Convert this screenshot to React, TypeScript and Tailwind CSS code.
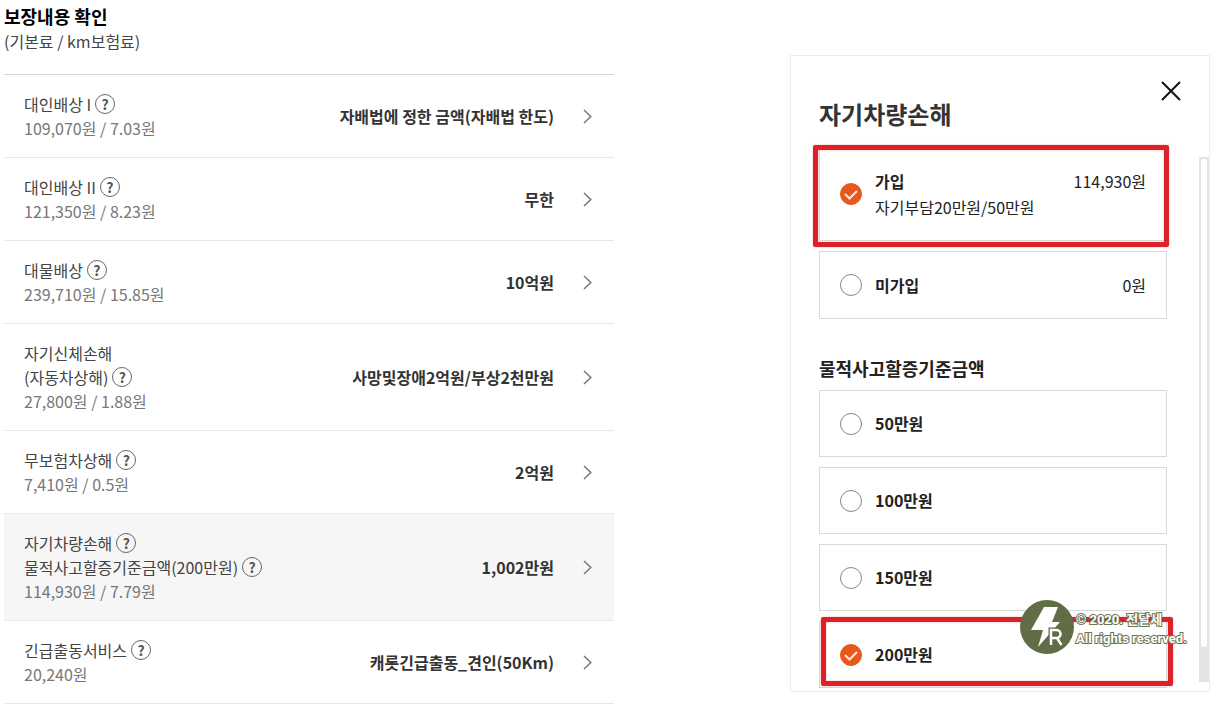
import React from "react";

const coverages = [
  {
    lines: [{ text: "대인배상 I", help: true }],
    price: "109,070원 / 7.03원",
    value: "자배법에 정한 금액(자배법 한도)",
  },
  {
    lines: [{ text: "대인배상 II", help: true }],
    price: "121,350원 / 8.23원",
    value: "무한",
  },
  {
    lines: [{ text: "대물배상", help: true }],
    price: "239,710원 / 15.85원",
    value: "10억원",
  },
  {
    lines: [
      { text: "자기신체손해", help: false },
      { text: "(자동차상해)", help: true },
    ],
    price: "27,800원 / 1.88원",
    value: "사망및장애2억원/부상2천만원",
  },
  {
    lines: [{ text: "무보험차상해", help: true }],
    price: "7,410원 / 0.5원",
    value: "2억원",
  },
  {
    lines: [
      { text: "자기차량손해", help: true },
      { text: "물적사고할증기준금액(200만원)", help: true },
    ],
    price: "114,930원 / 7.79원",
    value: "1,002만원",
    active: true,
  },
  {
    lines: [{ text: "긴급출동서비스", help: true }],
    price: "20,240원",
    value: "캐롯긴급출동_견인(50Km)",
  },
];

const HelpButton = ({ label }: { label: string }) => (
  <button
    type="button"
    aria-label={`${label} 도움말`}
    className="flex size-5 items-center justify-center rounded-full border border-[#666] text-sm font-bold leading-none text-[#555]"
  >
    ?
  </button>
);

const CoverageRow = ({ lines, price, value, active }: any) => (
  <li
    className={`flex items-center justify-between border-b border-[#e8e8e8] py-[17px] pl-5 pr-[21px] ${
      active ? "bg-[#f6f6f6]" : ""
    }`}
  >
    <div className="leading-6">
      {lines.map((line: any) => (
        <div key={line.text} className="flex items-center gap-1 text-[#444]">
          <span>{line.text}</span>
          {line.help && <HelpButton label={line.text} />}
        </div>
      ))}
      <div className="text-[#777]">{price}</div>
    </div>
    <div className="flex items-center gap-7">
      <span className="font-bold text-[#333]">{value}</span>
      <button type="button" aria-label={`${lines[0].text} 변경`}>
        <svg width="11" height="16" viewBox="0 0 11 16" fill="none">
          <path d="M2 2 8.800 8.500 2 15" stroke="#777" strokeWidth="1.500" />
        </svg>
      </button>
    </div>
  </li>
);

const Option = ({ name, title, detail, amount, checked, compact }: any) => (
  <label
    className={`flex items-center gap-[13px] border border-[#d9d9d9] px-5 py-5 text-[#222] ${
      compact ? "leading-[25px]" : "leading-[26px]"
    }`}
  >
    <span className="grid shrink-0 place-items-center">
      <input
        type="radio"
        name={name}
        defaultChecked={checked}
        className="peer col-start-1 row-start-1 size-[22px] appearance-none rounded-full border border-[#888] bg-white checked:border-[#e8571e] checked:bg-[#e8571e]"
      />
      <svg
        className="pointer-events-none invisible col-start-1 row-start-1 peer-checked:visible"
        width="22"
        height="22"
        viewBox="0 0 22 22"
        fill="none"
      >
        <path d="M5 11 9.500 15.500 17 8" stroke="#ffe9dc" strokeWidth="2" />
      </svg>
    </span>
    <span className="flex-1">
      <span className="flex justify-between">
        <span className="font-bold">{title}</span>
        {amount && <span>{amount}</span>}
      </span>
      {detail && <span className="block">{detail}</span>}
    </span>
  </label>
);

// red marker frame drawn over an option
const Marker = ({ className }: { className: string }) => (
  <div
    className={`pointer-events-none absolute rounded-xs border-5 border-[#dc2229] shadow-[0_0_2px_#f8a0a4,inset_0_0_2px_#f8a0a4] ${className}`}
  />
);

const Watermark = () => (
  <div className="pointer-events-none absolute right-5 bottom-[37px] flex w-[169px] items-center gap-0.5">
    <svg className="shrink-0" width="54" height="54" viewBox="0 0 54 54">
      <circle cx="27" cy="27" r="27" fill="#606d45" />
      <path d="M24 7h14l-6 15h8L18 47l5-17H11z" fill="#fff" />
      <path
        d="M31 45V30h5.500a4 4 0 0 1 0 8H31m6 0 4.500 7"
        fill="none"
        stroke="#606d45"
        strokeWidth="5"
      />
      <path
        d="M31 45V30h5.500a4 4 0 0 1 0 8H31m6 0 4.500 7"
        fill="none"
        stroke="#fff"
        strokeWidth="2.500"
      />
    </svg>
    <div className="pt-1 font-[Roboto,'Noto_Sans_CJK_KR',sans-serif] text-[13px] font-bold leading-[19px] whitespace-nowrap text-white [-webkit-text-stroke:2px_#6b7551] [paint-order:stroke_fill]">
      <p>© 2020. 전달세</p>
      <p>All rights reserved.</p>
    </div>
  </div>
);

const App = () => {
  return (
    <main className="flex items-start justify-between gap-8 bg-white pl-1 pr-[15px] font-['Noto_Sans_CJK_KR',sans-serif] text-base">
      <section className="max-w-[610px] flex-1 pt-[3px]">
        <h1 className="text-lg font-bold leading-[26px] text-black">
          보장내용 확인
        </h1>
        <p className="leading-6 text-[#444]">(기본료 / km보험료)</p>
        <ul className="mt-[21px] border-t border-[#d5d5d5]">
          {coverages.map((item) => (
            <CoverageRow key={item.price} {...item} />
          ))}
        </ul>
      </section>

      <aside className="relative mt-[55px] w-[420px] shrink-0 border border-[#ececec]">
        <header className="flex items-start justify-between pt-5 pr-[23px] pl-7">
          <h2 className="mt-5 mb-[15px] text-2xl font-bold leading-9 text-[#333]">
            자기차량손해
          </h2>
          <button
            type="button"
            aria-label="닫기"
            className="flex size-[30px] items-center justify-center"
          >
            <svg width="20" height="20" viewBox="0 0 20 20" fill="none">
              <path d="M1 1 19 19M19 1 1 19" stroke="#111" strokeWidth="2" />
            </svg>
          </button>
        </header>

        <div className="flex pb-[3px] pl-7">
          <div className="flex-1">
            <div className="relative">
              <Option
                name="join"
                title="가입"
                detail="자기부담20만원/50만원"
                amount="114,930원"
                checked
              />
              <Marker className="-top-0.5 -right-0.5 -bottom-1.5 -left-1.5" />
            </div>
            <div className="mt-2.5">
              <Option name="join" title="미가입" amount="0원" />
            </div>

            <h3 className="mt-9 mb-[9px] text-lg font-bold leading-[26px] text-[#222]">
              물적사고할증기준금액
            </h3>
            <div className="flex flex-col gap-2.5">
              <Option name="limit" title="50만원" compact />
              <Option name="limit" title="100만원" compact />
              <Option name="limit" title="150만원" compact />
              <div className="relative">
                <Option name="limit" title="200만원" checked compact />
                <Marker className="-top-1 -right-1.5 bottom-0.5 left-0.5" />
              </div>
            </div>
          </div>

          <div className="mt-2.5 mb-1.5 ml-8 w-2.5 bg-[#e4e4e4] px-0.5 pt-0.5 pb-[35px]">
            <div className="h-full rounded-sm bg-white" />
          </div>
        </div>

        <Watermark />
      </aside>
    </main>
  );
};

export default App;
